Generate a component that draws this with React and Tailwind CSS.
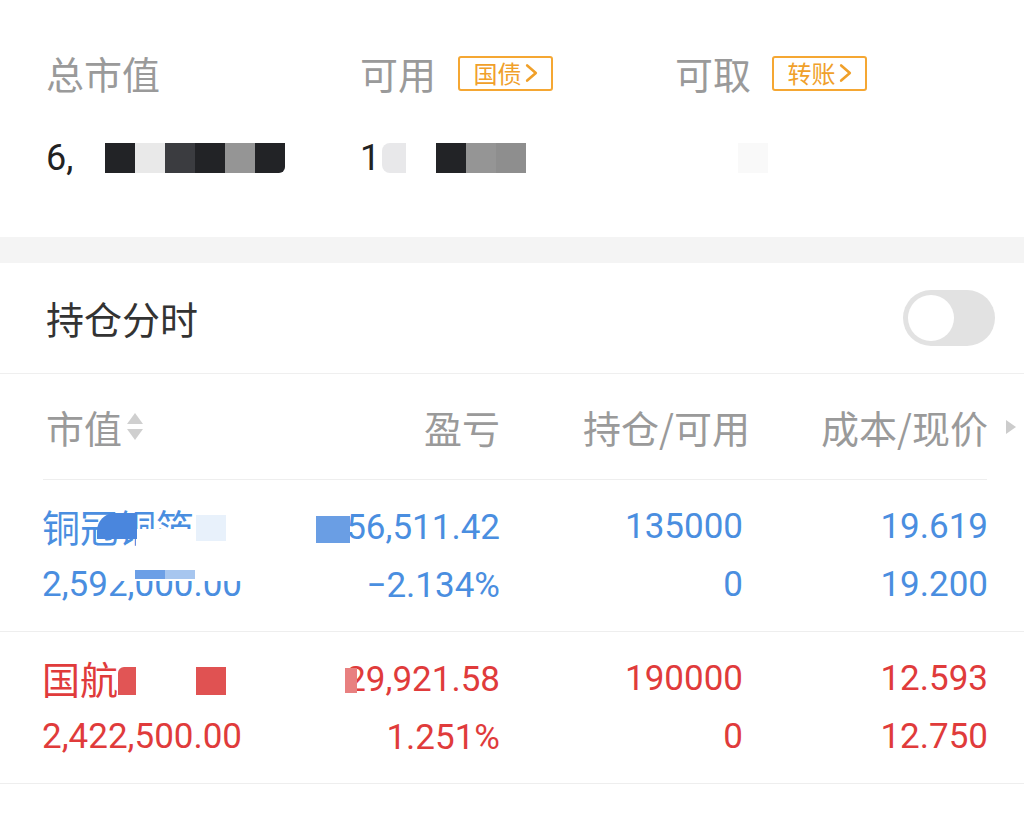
import React from "react";

const cjk = { fontFamily: '"Noto Sans CJK SC", "Noto Sans", sans-serif' };
const num = { fontFamily: 'Roboto, "Noto Sans", "Noto Sans CJK SC", sans-serif' };

function Chevron({ className }) {
    return (
        <svg viewBox="0 0 12 20" className={className} fill="none" stroke="currentColor" strokeWidth="2.4" strokeLinecap="round" strokeLinejoin="round">
            <path d="M2 3 L10 10 L2 17" />
        </svg>
    );
}

function Badge({ label }) {
    return (
        <span className="flex h-[35px] w-[95px] items-center justify-center gap-[3px] rounded-[3px] border-2 border-[#f5a733] text-[24px] leading-none text-[#f0a02a]" style={cjk}>
            {label}
            <Chevron className="h-[22px] w-[13px]" />
        </span>
    );
}

function Block({ c, w = "w-[30px]" }) {
    return <span className={`inline-block h-[30px] ${w} ${c}`} />;
}

function SortIcon() {
    return (
        <svg viewBox="0 0 22 30" className="ml-[2px] h-[30px] w-[22px]" fill="#cfcfcf">
            <path d="M11 1 L19 12 L3 12 Z" />
            <path d="M3 17 L19 17 L11 28 Z" />
        </svg>
    );
}

function Row({ color, name, mv, pl, pct, hold, avail, cost, price, masks }) {
    return (
        <div className={`flex h-[152px] flex-col justify-center gap-[10px] border-b border-[#eeeeee] ${color}`}>
            <div className="flex h-[48px] items-center pl-[42px] text-[35px] leading-none">
                <div className="relative w-[458px] shrink-0">
                    <span className="text-[38px]" style={cjk}>{name}</span>
                    {masks.name}
                    <span className="absolute right-0 top-1/2 -translate-y-1/2" style={num}>{pl}</span>
                    {masks.pl}
                </div>
                <div className="w-[243px] shrink-0 text-right" style={num}>{hold}</div>
                <div className="w-[245px] shrink-0 text-right" style={num}>{cost}</div>
            </div>
            <div className="flex h-[48px] items-center pl-[42px] text-[35px] leading-none" style={num}>
                <div className="relative w-[458px] shrink-0">
                    {mv}
                    {masks.mv}
                    <span className="absolute right-0 top-1/2 -translate-y-1/2">{pct}</span>
                </div>
                <div className="w-[243px] shrink-0 text-right">{avail}</div>
                <div className="w-[245px] shrink-0 text-right">{price}</div>
            </div>
        </div>
    );
}

export default function App() {
    return (
        <div className="min-h-[814px] w-[1024px] overflow-hidden bg-white text-[#333]">
            {/* 资产概览 */}
            <section className="h-[237px] pl-[46px] pt-[50px]">
                <div className="flex h-[46px] items-center">
                    <div className="w-[314px] text-[38px] leading-none text-[#9a9a9a]" style={cjk}>总市值</div>
                    <div className="flex w-[315px] items-center gap-[22px]">
                        <span className="text-[38px] leading-none text-[#9a9a9a]" style={cjk}>可用</span>
                        <Badge label="国债" />
                    </div>
                    <div className="flex items-center gap-[21px]">
                        <span className="text-[38px] leading-none text-[#9a9a9a]" style={cjk}>可取</span>
                        <Badge label="转账" />
                    </div>
                </div>
                <div className="mt-[47px] flex h-[30px] items-center text-[36px] leading-none text-[#222]" style={num}>
                    <div className="flex w-[314px] items-center">
                        <span className="w-[59px]">6,</span>
                        <Block c="bg-[#222326]" />
                        <Block c="bg-[#e9e9e9]" />
                        <Block c="bg-[#3b3c40]" />
                        <Block c="bg-[#222326]" />
                        <Block c="bg-[#959595]" />
                        <Block c="rounded-br-[6px] bg-[#222326]" />
                    </div>
                    <div className="flex w-[315px] items-center">
                        <span className="w-[22px]">1</span>
                        <Block c="rounded-l-[8px] bg-[#e8e8ea]" w="w-[24px]" />
                        <span className="w-[30px]" />
                        <Block c="bg-[#222326]" />
                        <Block c="bg-[#959595]" />
                        <Block c="bg-[#8e8e8e]" />
                    </div>
                    <div className="flex items-center pl-[63px]">
                        <Block c="bg-[#f9f9f9]" />
                    </div>
                </div>
            </section>

            <div className="h-[26px] bg-[#f4f4f4]" />

            {/* 持仓分时 */}
            <div className="flex h-[111px] items-center justify-between border-b border-[#efefef] pl-[46px] pr-[29px]">
                <span className="text-[38px] leading-none text-[#333]" style={cjk}>持仓分时</span>
                <span className="flex h-[56px] w-[92px] items-center rounded-full bg-[#e2e2e2] pl-[5px]">
                    <span className="h-[46px] w-[46px] rounded-full bg-white" />
                </span>
            </div>

            {/* 表头 */}
            <div className="flex h-[105px] items-center pl-[46px] text-[38px] leading-none text-[#9a9a9a]" style={cjk}>
                <div className="flex w-[454px] shrink-0 items-center">
                    市值
                    <SortIcon />
                    <span className="ml-auto">盈亏</span>
                </div>
                <div className="w-[250px] shrink-0 text-right">持仓/可用</div>
                <div className="w-[238px] shrink-0 text-right">成本/现价</div>
                <svg viewBox="0 0 12 16" className="ml-[17px] h-[16px] w-[12px]" fill="#cccccc">
                    <path d="M1 1 L11 8 L1 15 Z" />
                </svg>
            </div>
            <div className="ml-[43px] mr-[37px] border-b border-[#eeeeee]" />

            <Row
                color="text-[#4a8ee0]"
                name="铜冠铜箔"
                mv="2,592,000.00"
                pl="-56,511.42"
                pct="−2.134%"
                hold="135000"
                avail="0"
                cost="19.619"
                price="19.200"
                masks={{
                    name: (
                        <>
                            <span className="absolute left-[94px] top-[22px] h-[30px] w-[60px] bg-white" />
                            <span className="absolute left-[55px] top-[6px] h-[26px] w-[40px] rounded-tl-[18px] bg-[#4a86dd]" />
                            <span className="absolute left-[154px] top-[8px] h-[26px] w-[30px] bg-[#e8f1fb]" />
                        </>
                    ),
                    pl: <span className="absolute left-[274px] top-[9px] h-[27px] w-[34px] bg-[#6a9ee4]" />,
                    mv: (
                        <>
                            <span className="absolute left-[66px] top-[3px] h-[11px] w-[140px] bg-white" />
                            <span className="absolute left-[93px] top-[3px] h-[9px] w-[30px] bg-[#6c9fe6]" />
                            <span className="absolute left-[123px] top-[3px] h-[9px] w-[30px] bg-[#a7c6ef]" />
                        </>
                    ),
                }}
            />
            <Row
                color="text-[#e03b3b]"
                name="国航"
                mv="2,422,500.00"
                pl="29,921.58"
                pct="1.251%"
                hold="190000"
                avail="0"
                cost="12.593"
                price="12.750"
                masks={{
                    name: (
                        <>
                            <span className="absolute left-[76px] top-[8px] h-[28px] w-[18px] rounded-tl-[6px] bg-[#e15555]" />
                            <span className="absolute left-[154px] top-[8px] h-[28px] w-[30px] bg-[#e05252]" />
                        </>
                    ),
                    pl: <span className="absolute left-[303px] top-[9px] h-[25px] w-[12px] bg-[#e88080]" />,
                    mv: null,
                }}
            />
        </div>
    );
}
